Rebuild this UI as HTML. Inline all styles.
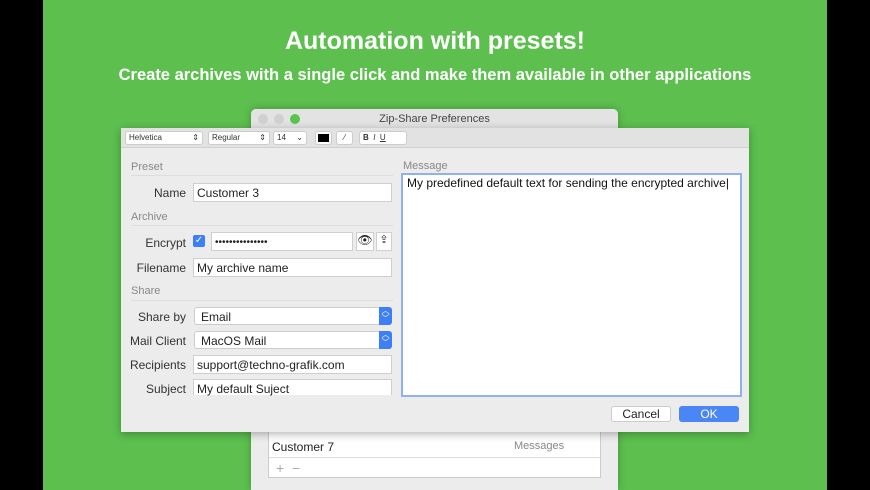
<!DOCTYPE html><html><head><style>
*{margin:0;padding:0;box-sizing:border-box}
body{width:870px;height:490px;background:#000;font-family:"Liberation Sans",sans-serif;position:relative;overflow:hidden}
.a{position:absolute}
.green{left:43px;top:0;width:784px;height:490px;background:#5cbf4e}
.fld{position:absolute;background:#fff;border:1px solid #cfcfcf;font-size:12px;color:#222;padding:2px 0 0 3px;height:19px}
.lbl{position:absolute;font-size:12px;color:#333;text-align:right;width:66px;left:120px}
.sec{position:absolute;font-size:11px;color:#888;left:131px}
.ln{position:absolute;left:131px;width:262px;height:1px;background:#ddd}
.tb{position:absolute;top:131px;height:14px;background:#fff;border:1px solid #ccc;border-radius:3px;font-size:8px;color:#333;padding:1px 3px}
.pop{position:absolute;background:#fff;border:1px solid #ccc;border-radius:3px;font-size:12px;color:#222;padding:2px 0 0 6px;height:18px}
.st{position:absolute;right:-1px;top:-1px;width:13px;height:18px;background:#3f7ff5;border-radius:0 3px 3px 0;color:#fff;font-size:8px;text-align:center;line-height:8px}
</style></head><body>
<div class="a green"></div>
<div class="a" style="left:0;top:27px;width:870px;text-align:center;color:#fff;font-size:25px;font-weight:bold">Automation with presets!</div>
<div class="a" style="left:0;top:66px;width:870px;text-align:center;color:#fff;font-size:16.5px;font-weight:bold">Create archives with a single click and make them available in other applications</div>
<!-- back window -->
<div class="a" style="left:251px;top:109px;width:367px;height:381px;background:#ececec;border-radius:5px 5px 0 0;box-shadow:0 0 8px rgba(0,0,0,.25)"></div>
<div class="a" style="left:251px;top:109px;width:367px;height:20px;background:#e3e3e3;border-radius:5px 5px 0 0;font-size:11px;color:#444;text-align:center;line-height:20px">Zip-Share Preferences</div>
<div class="a" style="left:258px;top:114px;width:10px;height:10px;border-radius:50%;background:#d0d0d0"></div>
<div class="a" style="left:274px;top:114px;width:10px;height:10px;border-radius:50%;background:#d0d0d0"></div>
<div class="a" style="left:290px;top:114px;width:10px;height:10px;border-radius:50%;background:#5ac54d"></div>
<div class="a" style="left:268px;top:432px;width:333px;height:46px;background:#fff;border:1px solid #ccc;border-top:none"></div>
<div class="a" style="left:272px;top:440px;font-size:12px;color:#222">Customer 7</div>
<div class="a" style="left:514px;top:440px;font-size:11px;color:#888">Messages</div>
<div class="a" style="left:269px;top:457px;width:331px;height:1px;background:#ddd"></div>
<div class="a" style="left:276px;top:460px;font-size:14px;color:#aaa">+ &nbsp;−</div>
<!-- sheet -->
<div class="a" style="left:121px;top:128px;width:628px;height:304px;background:#ececec;box-shadow:0 2px 8px rgba(0,0,0,.3)"></div>
<div class="a" style="left:121px;top:128px;width:628px;height:20px;background:#e2e2e2;border-bottom:1px solid #d0d0d0"></div>
<div class="tb" style="left:125px;width:78px">Helvetica<span style="float:right">⇕</span></div>
<div class="tb" style="left:208px;width:62px">Regular<span style="float:right">⇕</span></div>
<div class="tb" style="left:273px;width:34px">14<span style="float:right">⌄</span></div>
<div class="tb" style="left:315px;width:17px;padding:2px"><div style="width:100%;height:100%;background:#000"></div></div>
<div class="tb" style="left:336px;width:17px;text-align:center">⁄</div>
<div class="tb" style="left:359px;width:48px;font-weight:bold">B &nbsp;<i style="font-weight:normal">I</i> &nbsp;<u style="font-weight:normal">U</u></div>
<div class="sec" style="top:161px">Preset</div><div class="ln" style="top:175px"></div>
<div class="lbl" style="top:186px">Name</div><div class="fld" style="left:193px;top:183px;width:199px">Customer 3</div>
<div class="sec" style="top:211px">Archive</div><div class="ln" style="top:225px"></div>
<div class="lbl" style="top:236px">Encrypt</div>
<div class="a" style="left:193px;top:235px;width:12px;height:12px;background:#3f7ff5;border-radius:2px;color:#fff;font-size:10px;text-align:center;line-height:12px">✓</div>
<div class="fld" style="left:211px;top:232px;width:142px;font-size:10px;padding-top:4px">•••••••••••••••</div>
<div class="fld" style="left:356px;top:232px;width:18px;padding:0;text-align:center;font-size:12px">👁</div>
<div class="fld" style="left:376px;top:232px;width:16px;padding:0;text-align:center;font-size:11px">⇪</div>
<div class="lbl" style="top:261px">Filename</div><div class="fld" style="left:193px;top:258px;width:199px">My archive name</div>
<div class="sec" style="top:285px">Share</div><div class="ln" style="top:300px"></div>
<div class="lbl" style="top:310px">Share by</div><div class="pop" style="left:194px;top:307px;width:198px">Email<div class="st">︿<br>﹀</div></div>
<div class="lbl" style="top:334px">Mail Client</div><div class="pop" style="left:194px;top:331px;width:198px">MacOS Mail<div class="st">︿<br>﹀</div></div>
<div class="lbl" style="top:358px">Recipients</div><div class="fld" style="left:193px;top:355px;width:199px">support@techno-grafik.com</div>
<div class="lbl" style="top:382px">Subject</div><div class="fld" style="left:193px;top:379px;width:199px;height:16px;border-bottom:none">My default Suject</div>
<div class="a" style="left:403px;top:160px;font-size:11px;color:#888">Message</div>
<div class="a" style="left:401px;top:173px;width:341px;height:224px;background:#fff;border:2px solid #8fb1f0;font-size:12px;color:#111;padding:1px 4px">My predefined default text for sending the encrypted archive|</div>
<div class="a" style="left:611px;top:406px;width:60px;height:16px;background:#fff;border:1px solid #ccc;border-radius:3px;font-size:12px;text-align:center;line-height:14px;color:#222">Cancel</div>
<div class="a" style="left:679px;top:406px;width:60px;height:16px;background:#4a86f5;border-radius:3px;font-size:12px;text-align:center;line-height:16px;color:#fff">OK</div>
</body></html>
